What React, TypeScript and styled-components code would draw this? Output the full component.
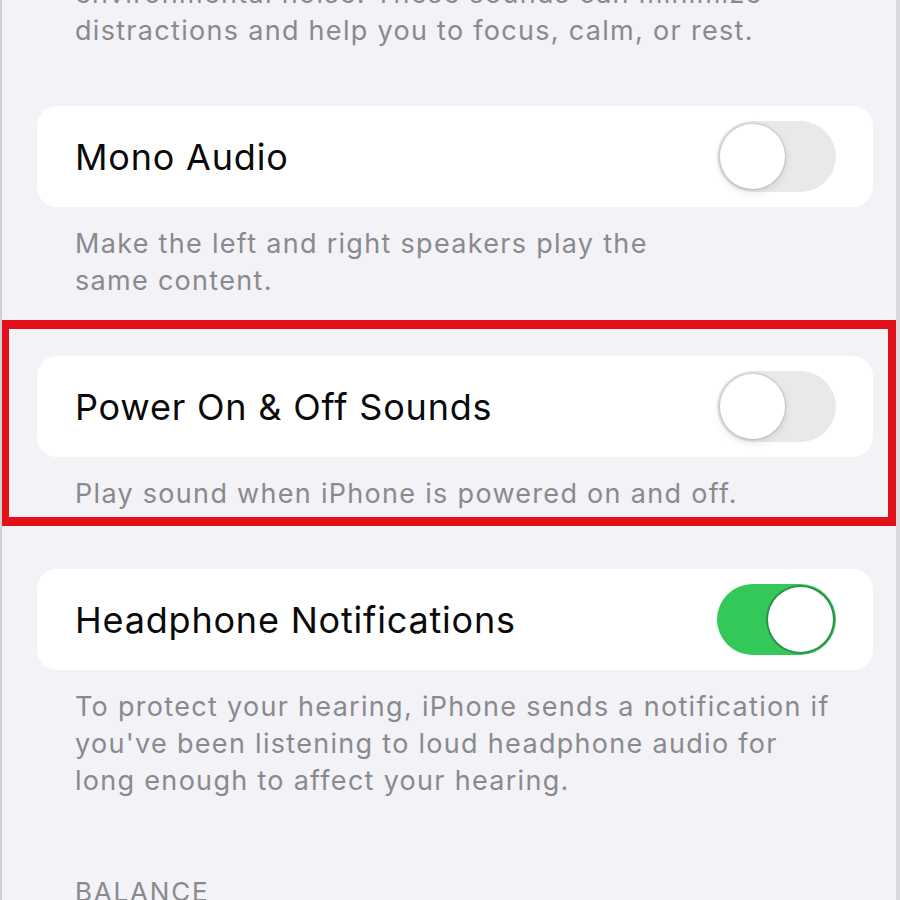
import React from "react";
import styled, { createGlobalStyle } from "styled-components";

const GlobalStyle = createGlobalStyle`
  html, body {
    margin: 0;
    padding: 0;
    background: #f2f2f7;
  }
  body {
    font-family: Inter, "Liberation Sans", Arial, sans-serif;
    -webkit-font-smoothing: antialiased;
  }
`;

const Screen = styled.div`
  width: 900px;
  height: 900px;
  box-sizing: border-box;
  overflow: hidden;
  background: #f2f2f7;
  border-left: 2px solid #d2d2d6;
  border-right: 4px solid #d9d9de;
  padding: 0 23px 0 35px;
  display: flex;
  flex-direction: column;
  gap: 57px;
`;

const Note = styled.p`
  margin: 0;
  padding: 0 38px 0 38px;
  font-size: 27px;
  line-height: 37px;
  color: #8a8a8e;
  letter-spacing: 1.3px;
`;

const TopNote = styled(Note)`
  margin-top: -25px;
  padding-right: 20px;
`;

const Section = styled.section<{ $highlight?: boolean }>`
  position: relative;
  display: flex;
  flex-direction: column;
  gap: 18px;

  ${({ $highlight }) =>
    $highlight &&
    `
    &::after {
      content: "";
      position: absolute;
      top: -36px;
      left: -37px;
      right: -24px;
      bottom: -14px;
      border: 9px solid #e2101b;
      pointer-events: none;
    }
  `}
`;

const Card = styled.div`
  height: 101px;
  box-sizing: border-box;
  background: #ffffff;
  border-radius: 20px;
  padding: 0 37px 0 38px;
  display: flex;
  align-items: center;
  justify-content: space-between;
`;

const Title = styled.span`
  font-size: 36px;
  color: #0a0a0a;
  letter-spacing: 0.8px;
`;

const Track = styled.div<{ $on?: boolean }>`
  width: 119px;
  height: 71px;
  border-radius: 36px;
  background: ${({ $on }) => ($on ? "#34c759" : "#e9e9eb")};
  position: relative;
  flex-shrink: 0;
`;

const Knob = styled.div<{ $on?: boolean }>`
  position: absolute;
  top: 3px;
  left: ${({ $on }) => ($on ? "51px" : "3px")};
  width: 65px;
  height: 65px;
  border-radius: 50%;
  background: #ffffff;
  box-shadow: ${({ $on }) =>
    $on
      ? "0 0 0 2px rgba(40, 80, 50, 0.45)"
      : "0 0 0 1.5px rgba(0, 0, 0, 0.08), 0 3px 8px rgba(0, 0, 0, 0.12)"};
`;

const Toggle = ({ on }: { on?: boolean }) => (
  <Track $on={on}>
    <Knob $on={on} />
  </Track>
);

const Header = styled.div`
  margin-top: 20px;
  padding-left: 38px;
  font-size: 26px;
  line-height: 32px;
  color: #8a8a8e;
  letter-spacing: 1.8px;
`;

type Row = {
  title: string;
  note: React.ReactNode;
  on?: boolean;
  highlight?: boolean;
};

const rows: Row[] = [
  {
    title: "Mono Audio",
    note: (
      <>
        Make the left and right speakers play the
        <br />
        same content.
      </>
    ),
  },
  {
    title: "Power On & Off Sounds",
    note: "Play sound when iPhone is powered on and off.",
    highlight: true,
  },
  {
    title: "Headphone Notifications",
    note:
      "To protect your hearing, iPhone sends a notification if you've been listening to loud headphone audio for long enough to affect your hearing.",
    on: true,
  },
];

const App = () => (
  <>
    <GlobalStyle />
    <Screen>
      <TopNote>
        environmental noise. These sounds can minimize distractions and help
        you to focus, calm, or rest.
      </TopNote>
      {rows.map((r) => (
        <Section key={r.title} $highlight={r.highlight}>
          <Card>
            <Title>{r.title}</Title>
            <Toggle on={r.on} />
          </Card>
          <Note>{r.note}</Note>
        </Section>
      ))}
      <Header>BALANCE</Header>
    </Screen>
  </>
);

export default App;
